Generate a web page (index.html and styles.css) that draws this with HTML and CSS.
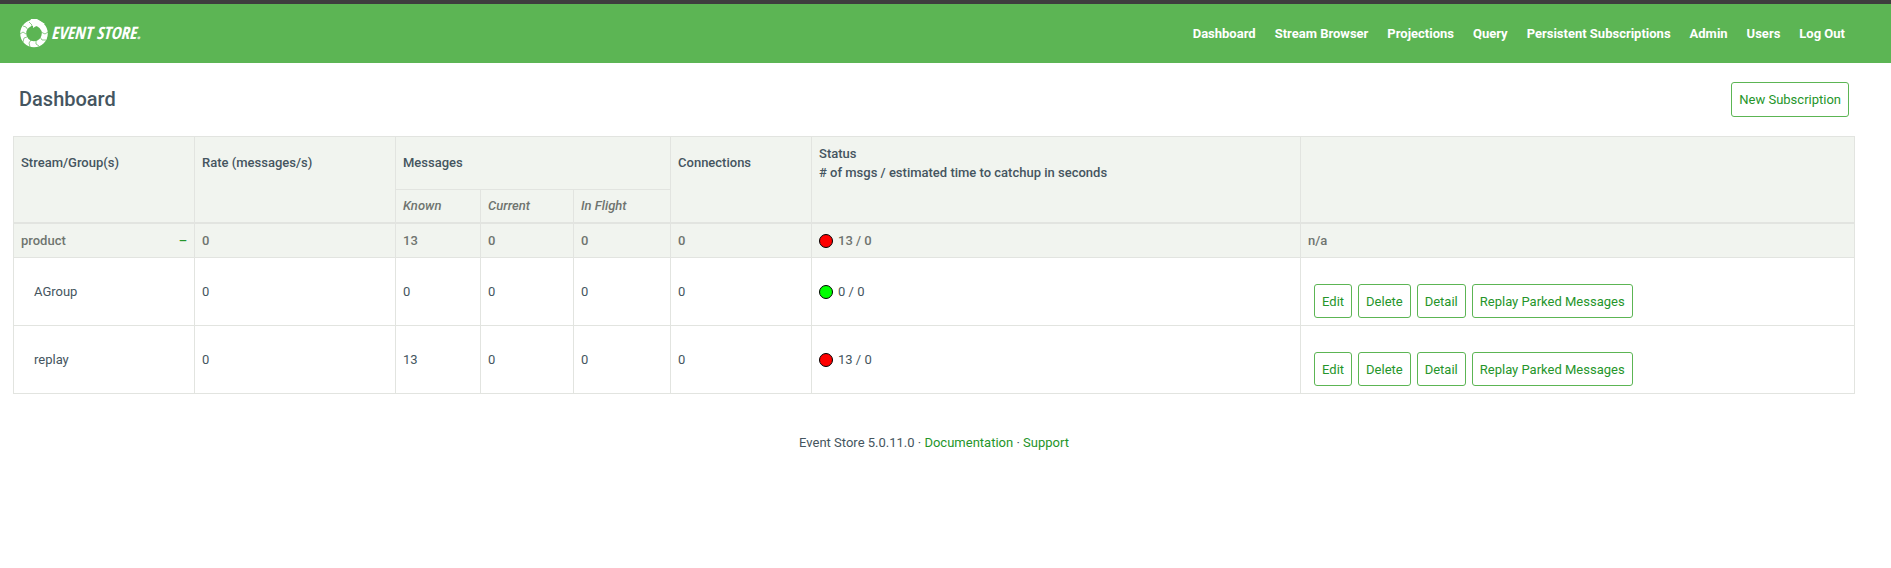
FILE: index.html
```html
<!DOCTYPE html>
<html lang="en">
<head>
<meta charset="utf-8">
<title>Event Store</title>
<link rel="stylesheet" href="styles.css">
</head>
<body>
<header class="site-header">
  <a class="logo" href="#">
    <svg class="logo-mark" viewBox="0 0 28 30" aria-hidden="true">
      <circle cx="14" cy="15.500" r="10.800" fill="none" stroke="#fff" stroke-width="6"/>
      <path d="M11 1l6 0 8 5-7 1-5 3 0-3-4-2z" fill="#fff"/>
      <g fill="none" stroke="#5cb554" stroke-width="0.700">
        <path d="M9 4l3 3-1 3M3 8l3 1 2 3M0 16l3-2 3 2M3 24l1-4 3-1M10 29l-1-4 2-3M19 28l-3-2 0-4M26 22l-4 0-2-3M28 14l-3 2-4-2"/>
      </g>
    </svg>
    <span class="logo-text">EVENT STORE<span class="logo-dot">.</span></span>
  </a>
  <nav class="site-nav">
    <a href="#">Dashboard</a>
    <a href="#">Stream Browser</a>
    <a href="#">Projections</a>
    <a href="#">Query</a>
    <a href="#">Persistent Subscriptions</a>
    <a href="#">Admin</a>
    <a href="#">Users</a>
    <a href="#">Log Out</a>
  </nav>
</header>
<main class="content">
  <div class="page-head">
    <h1 class="page-title">Dashboard</h1>
    <button class="btn" type="button">New Subscription</button>
  </div>
  <table class="subs">
    <colgroup>
      <col class="col-stream"><col class="col-rate"><col class="col-known"><col class="col-current"><col class="col-flight"><col class="col-conn"><col class="col-status"><col>
    </colgroup>
    <thead>
      <tr class="head-main">
        <th rowspan="2">Stream/Group(s)</th>
        <th rowspan="2">Rate (messages/s)</th>
        <th colspan="3">Messages</th>
        <th rowspan="2">Connections</th>
        <th class="head-status" rowspan="2">Status<br># of msgs / estimated time to catchup in seconds</th>
        <th rowspan="2"></th>
      </tr>
      <tr class="head-sub">
        <th>Known</th>
        <th>Current</th>
        <th>In Flight</th>
      </tr>
    </thead>
    <tbody>
      <tr class="stream-row">
        <td><div class="stream-name">product <a href="#">–</a></div></td>
        <td>0</td><td>13</td><td>0</td><td>0</td><td>0</td>
        <td><div class="status"><span class="dot dot-red"></span>13 / 0</div></td>
        <td>n/a</td>
      </tr>
      <tr>
        <td class="group-name">AGroup</td>
        <td>0</td><td>0</td><td>0</td><td>0</td><td>0</td>
        <td><div class="status"><span class="dot dot-green"></span>0 / 0</div></td>
        <td class="actions-cell"><div class="actions">
          <button class="btn" type="button">Edit</button>
          <button class="btn" type="button">Delete</button>
          <button class="btn" type="button">Detail</button>
          <button class="btn" type="button">Replay Parked Messages</button>
        </div></td>
      </tr>
      <tr>
        <td class="group-name">replay</td>
        <td>0</td><td>13</td><td>0</td><td>0</td><td>0</td>
        <td><div class="status"><span class="dot dot-red"></span>13 / 0</div></td>
        <td class="actions-cell"><div class="actions">
          <button class="btn" type="button">Edit</button>
          <button class="btn" type="button">Delete</button>
          <button class="btn" type="button">Detail</button>
          <button class="btn" type="button">Replay Parked Messages</button>
        </div></td>
      </tr>
    </tbody>
  </table>
</main>
<footer class="site-footer">Event Store 5.0.11.0 · <a href="#">Documentation</a> · <a href="#">Support</a></footer>
</body>
</html>
```

FILE: styles.css
```css
* {
  box-sizing: border-box;
}

body {
  margin: 0;
  background: #fff;
  color: #455560;
  font: 13px/19px Roboto, "Open Sans", sans-serif;
}

a {
  color: #25952a;
  text-decoration: none;
}

.site-header {
  display: flex;
  align-items: center;
  justify-content: space-between;
  height: 63px;
  padding: 0 46px 0 20px;
  border-top: 4px solid #3e3e3e;
  background: #5cb554;
}

.logo {
  display: flex;
  align-items: center;
  gap: 3px;
  padding-bottom: 2px;
  color: #fff;
}

.logo-mark {
  width: 28px;
  height: 30px;
}

.logo-text {
  font: italic bold 17px/20px "Liberation Sans Narrow", "Open Sans Condensed", "DejaVu Sans Condensed", sans-serif;
}

.logo-dot {
  font-weight: normal;
  opacity: 0.7;
}

.site-nav {
  display: flex;
  gap: 19px;
}

.site-nav a {
  color: #fff;
  font-weight: 700;
}

.content {
  padding: 19px 36px 0 13px;
}

.page-head {
  display: flex;
  align-items: center;
  justify-content: space-between;
  padding: 0 6px 19px;
}

.page-title {
  margin: 0;
  padding-bottom: 1px;
  font-size: 20px;
  line-height: 24px;
  font-weight: 500;
}

.btn {
  height: 35px;
  padding: 0 7px;
  border: 1px solid #5cb554;
  border-radius: 3px;
  background: #fff;
  color: #25952a;
  font: inherit;
}

.subs {
  width: 100%;
  border-collapse: collapse;
  table-layout: fixed;
}

.col-stream { width: 181px; }
.col-rate { width: 201px; }
.col-known { width: 85px; }
.col-current { width: 93px; }
.col-flight { width: 97px; }
.col-conn { width: 141px; }
.col-status { width: 489px; }

.subs th,
.subs td {
  padding: 7px;
  border: 1px solid #e2e4e0;
  text-align: left;
}

.subs thead {
  background: #f1f4ef;
  border-bottom: 2px solid #e2e4e0;
}

.subs th {
  font-weight: 500;
  vertical-align: top;
}

.subs .head-main th {
  padding: 16px 7px 17px;
}

.subs .head-main .head-status {
  padding: 7px;
}

.subs .head-sub th {
  padding: 6px 7px 7px;
  color: #6f746f;
  font-style: italic;
}

.subs .stream-row {
  background: #f1f4ef;
  color: #6f746f;
  font-weight: 500;
}

.stream-name {
  display: flex;
  justify-content: space-between;
}

.subs .group-name {
  padding-left: 20px;
}

.status {
  display: flex;
  align-items: center;
  gap: 5px;
}

.dot {
  width: 14px;
  height: 14px;
  border: 1px solid #000;
  border-radius: 50%;
}

.dot-red { background: #f00; }
.dot-green { background: #0f0; }

.subs .actions-cell {
  padding: 26px 13px 7px;
}

.actions {
  display: flex;
  gap: 6px;
}

.actions .btn {
  height: 34px;
}

.site-footer {
  padding: 39px 36px 20px 13px;
  text-align: center;
}
```
